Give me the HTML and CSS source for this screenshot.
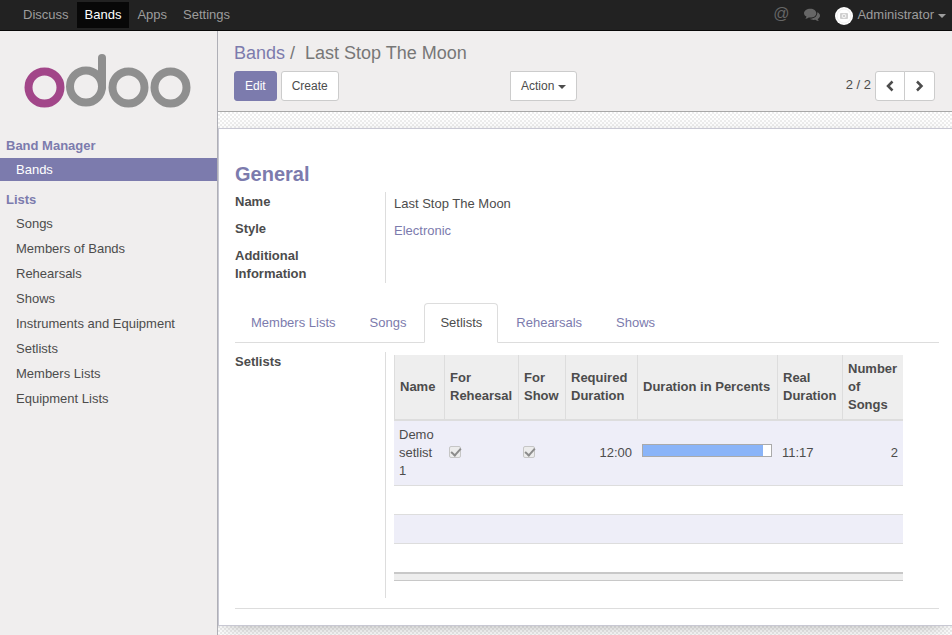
FILE: index.html
```html
<!DOCTYPE html>
<html lang="en">
<head>
<meta charset="utf-8">
<title>Last Stop The Moon - Odoo</title>
<link rel="stylesheet" href="styles.css">
</head>
<body>
<nav class="navbar">
  <ul class="apps">
    <li><a href="#">Discuss</a></li>
    <li><a href="#" class="active">Bands</a></li>
    <li><a href="#">Apps</a></li>
    <li><a href="#">Settings</a></li>
  </ul>
  <div class="systray">
    <a href="#" class="mention" aria-label="Mentions">@</a>
    <a href="#" class="chat" aria-label="Conversations">
      <svg width="16" height="14" viewBox="0 0 16 14"><path fill="#666" d="M6.3 0.8c3.4 0 6 1.9 6 4.4s-2.600 4.400-6 4.400c-.6 0-1.100 0-1.600-.1-1 .8-2.200 1.200-3.400 1.300.6-.7 1-1.300 1.200-2.200C1 7.800 0 6.600 0 5.200 0 2.700 2.900.8 6.300.8z"/><path fill="#666" d="M13.300 4.300c1.600.7 2.700 1.900 2.700 3.400 0 1.300-1 2.500-2.400 3.300.2.800.6 1.500 1.300 2.100-1.300-.1-2.500-.5-3.500-1.300-2 .4-4.200 0-5.700-1 4.200 0 7.800-2.100 7.600-6.500z"/></svg>
    </a>
    <a href="#" class="user">
      <svg width="18" height="18" viewBox="0 0 18 18"><circle cx="9" cy="9" r="9" fill="#fff"/><circle cx="9" cy="9" r="7" fill="none" stroke="#efefef"/><rect x="5" y="6" width="8" height="6" rx="1" fill="#d0d0d0"/><circle cx="9" cy="9" r="1.800" fill="#d0d0d0" stroke="#fff" stroke-width=".8"/></svg>
      Administrator <span class="caret"></span>
    </a>
  </div>
</nav>
<div class="page">
  <aside class="sidebar">
    <a href="#" class="logo" aria-label="Odoo">
      <svg width="168" height="54" viewBox="0 0 168 54" fill="none" stroke="#8f8f8f" stroke-width="8"><circle cx="20.500" cy="33.500" r="16" stroke="#a24689"/><circle cx="62" cy="32.500" r="16"/><path d="M78 4v29" stroke-linecap="round"/><circle cx="104.500" cy="33.500" r="16"/><circle cx="146.500" cy="33.500" r="16"/></svg>
    </a>
    <h2>Band Manager</h2>
    <ul class="menu">
      <li><a href="#" class="active">Bands</a></li>
    </ul>
    <h2>Lists</h2>
    <ul class="menu">
      <li><a href="#">Songs</a></li>
      <li><a href="#">Members of Bands</a></li>
      <li><a href="#">Rehearsals</a></li>
      <li><a href="#">Shows</a></li>
      <li><a href="#">Instruments and Equipment</a></li>
      <li><a href="#">Setlists</a></li>
      <li><a href="#">Members Lists</a></li>
      <li><a href="#">Equipment Lists</a></li>
    </ul>
  </aside>
  <main class="main">
    <header class="control">
      <div class="crumbs"><a href="#">Bands</a><span class="slash">/</span><span>Last Stop The Moon</span></div>
      <div class="tools">
        <div class="buttons">
          <button class="btn primary">Edit</button>
          <button class="btn">Create</button>
        </div>
        <div class="right">
          <button class="btn square">Action <span class="caret"></span></button>
          <div class="pager">
            <span>2 / 2</span>
            <div class="group">
              <button class="btn" aria-label="Previous"><svg width="10" height="12" viewBox="0 0 10 12"><path d="M7.500 1.500L3 6l4.500 4.500" fill="none" stroke="#4c4c4c" stroke-width="2.500"/></svg></button>
              <button class="btn" aria-label="Next"><svg width="11" height="12" viewBox="0 0 11 12"><path d="M3 1.500L7.500 6 3 10.500" fill="none" stroke="#4c4c4c" stroke-width="2.500"/></svg></button>
            </div>
          </div>
        </div>
      </div>
    </header>
    <div class="canvas">
      <section class="sheet">
        <h1>General</h1>
        <dl class="fields">
          <div class="field"><dt>Name</dt><dd>Last Stop The Moon</dd></div>
          <div class="field"><dt>Style</dt><dd><a href="#">Electronic</a></dd></div>
          <div class="field"><dt>Additional Information</dt><dd></dd></div>
        </dl>
        <ul class="tabs">
          <li><a href="#">Members Lists</a></li>
          <li><a href="#">Songs</a></li>
          <li><a href="#" class="active">Setlists</a></li>
          <li><a href="#">Rehearsals</a></li>
          <li><a href="#">Shows</a></li>
        </ul>
        <div class="pane">
          <div class="pane-label">Setlists</div>
          <div class="pane-body">
            <table class="list">
              <colgroup><col class="c-name"><col class="c-reh"><col class="c-show"><col class="c-req"><col class="c-pct"><col class="c-real"><col class="c-num"></colgroup>
              <thead>
                <tr><th>Name</th><th>For Rehearsal</th><th>For Show</th><th>Required Duration</th><th>Duration in Percents</th><th>Real Duration</th><th>Number of Songs</th></tr>
              </thead>
              <tbody>
                <tr><td>Demo setlist 1</td><td><input type="checkbox" checked disabled aria-label="For Rehearsal"></td><td><input type="checkbox" checked disabled aria-label="For Show"></td><td class="num">12:00</td><td><div class="bar"><div class="fill" style="width:94%"></div></div></td><td>11:17</td><td class="num">2</td></tr>
                <tr class="blank"><td colspan="7"></td></tr>
                <tr class="blank"><td colspan="7"></td></tr>
                <tr class="blank"><td colspan="7"></td></tr>
              </tbody>
              <tfoot><tr><td colspan="7"></td></tr></tfoot>
            </table>
          </div>
        </div>
      </section>
    </div>
  </main>
</div>
</body>
</html>
```

FILE: styles.css
```css
* { box-sizing: border-box; }
body {
  margin: 0;
  min-height: 100vh;
  display: flex;
  flex-direction: column;
  font: 13px/18px "Liberation Sans", Arial, sans-serif;
  color: #4c4c4c;
}
a { color: #7c7bad; text-decoration: none; }
ul, dl, dd, h1, h2 { margin: 0; padding: 0; list-style: none; }
svg { display: block; }

.navbar {
  display: flex;
  justify-content: space-between;
  height: 31px;
  background: #222;
  border-bottom: 1px solid #080808;
}
.navbar a { color: #9d9d9d; }
.apps { display: flex; padding: 2px 0 2px 15px; }
.apps a { display: block; padding: 4px 8px; }
.apps a.active { background: #080808; color: #fff; }
.systray { display: flex; align-items: center; padding-right: 6px; }
.systray .mention { color: #666; font-size: 16px; padding: 0 15px 2px 0; }
.chat { padding-right: 15px; }
.user { display: flex; align-items: center; gap: 4px; }
.user svg { margin-top: 2px; }
.caret {
  display: inline-block;
  border: 4px solid transparent;
  border-top-color: currentColor;
  border-bottom: 0;
  vertical-align: middle;
}
.user .caret { margin-top: 2px; }

.page { display: flex; flex: 1; }
.sidebar {
  flex: 0 0 218px;
  background: #f0eeee;
  border-right: 1px solid #afafb6;
}
.logo { display: block; padding: 23px 24px 29px; }
.sidebar h2 { padding: 0 6px; font-size: 13px; line-height: 18px; color: #7c7bad; }
.menu { padding: 3px 0 10px; }
.menu a { display: block; padding: 3px 16px 4px; color: #4c4c4c; }
.menu a.active { padding: 3px 16px 2px; background: #7c7bad; color: #fff; }

.main { flex: 1; min-width: 0; display: flex; flex-direction: column; }
.control {
  padding: 10px 17px 10px 16px;
  background: #f0eeee;
  border-bottom: 1px solid #a8a8a8;
}
.crumbs { font-size: 18px; line-height: 24px; color: #777; }
.slash { padding: 0 10px 0 5px; }
.tools { display: grid; grid-template-columns: 276px 1fr; padding-top: 6px; }
.buttons { display: flex; gap: 4px; }
.right { display: flex; justify-content: space-between; }
.btn {
  height: 30px;
  padding: 0 10px;
  border: 1px solid #ccc;
  border-radius: 3px;
  background: #fff;
  color: #4c4c4c;
  font: 12px/18px "Liberation Sans", Arial, sans-serif;
}
.btn.primary { background: #7c7bad; border-color: #7c7bad; color: #fff; }
.btn.square { border-radius: 0 3px 3px 0; }
.pager { display: flex; gap: 4px; line-height: 28px; }
.group { display: flex; }
.group .btn { padding: 0 9px; }
.group .btn + .btn { margin-left: -1px; border-radius: 0 3px 3px 0; }
.group .btn:first-child { border-radius: 3px 0 0 3px; }

.canvas {
  flex: 1;
  overflow: hidden;
  padding: 16px 0 9px;
  background: repeating-conic-gradient(#eee 0 25%, #fff 0 50%) 0 0 / 4px 4px;
}
.sheet {
  padding: 32px 13px 16px 16px;
  background: #fff;
  border: 1px solid #c8c8d3;
  border-right: 0;
  box-shadow: 0 5px 20px -8px rgba(0, 0, 0, 0.4);
}
.sheet h1 { font-size: 20px; line-height: 26px; color: #7c7bad; }
.fields {
  padding-top: 6px;
  background: linear-gradient(#ddd, #ddd) 150px 5px / 1px 100% no-repeat;
}
.field { display: grid; grid-template-columns: 150px 1fr; }
.field dt { padding: 0 30px 9px 0; font-weight: bold; }
.field:last-child dt { padding-bottom: 0; }
.field dd { padding: 2px 9px 0; }

.tabs { display: flex; margin-top: 20px; border-bottom: 1px solid #ddd; }
.tabs a {
  display: block;
  margin: 0 2px -1px 0;
  padding: 10px 15px;
  border: 1px solid transparent;
  border-radius: 4px 4px 0 0;
}
.tabs a.active { background: #fff; border-color: #ddd; border-bottom-color: #fff; color: #4c4c4c; }

.pane {
  display: grid;
  grid-template-columns: 150px 1fr;
  margin-top: 9px;
  padding-bottom: 10px;
  border-bottom: 1px solid #ddd;
}
.pane-label { padding-top: 1px; font-weight: bold; }
.pane-body { border-left: 1px solid #ddd; padding: 3px 36px 17px 8px; }
.list { width: 100%; table-layout: fixed; border-collapse: separate; border-spacing: 0; }
.c-name { width: 50px; }
.c-reh { width: 74px; }
.c-show { width: 47px; }
.c-req { width: 72px; }
.c-pct { width: 140px; }
.c-real { width: 65px; }
.list th {
  height: 66px;
  padding: 4px 5px 5px;
  background: #eee;
  border-left: 1px solid #ddd;
  border-bottom: 2px solid #ddd;
  text-align: left;
}
.list td { height: 65px; padding: 5px; border-bottom: 1px solid #ddd; }
.list tbody tr:nth-child(odd) { background: #eeeef8; }
.list .num { text-align: right; }
.list .blank td { height: 29px; padding: 0; }
.list tbody tr:last-child td { height: 28px; border-bottom: 0; }
.list tfoot td { height: 9px; padding: 0; background: #eee; border-top: 2px solid #c8c8c8; border-bottom: 1px solid #c8c8c8; }
.list input {
  appearance: none;
  display: block;
  width: 12px;
  height: 12px;
  margin: 0 0 2px;
  border: 1px solid #c6c6c6;
  border-radius: 2px;
  background: #ececec;
}
.list input::before {
  content: "";
  display: block;
  width: 8px;
  height: 4px;
  margin: 2px 1px;
  border: solid #8c8c8c;
  border-width: 0 0 2px 2px;
  transform: translate(0, -1px) rotate(-48deg);
}
.bar { height: 13px; margin-bottom: 5px; border: 1px solid #aaa; background: #fff; }
.fill { height: 100%; background: #8ab4f8; }
```
